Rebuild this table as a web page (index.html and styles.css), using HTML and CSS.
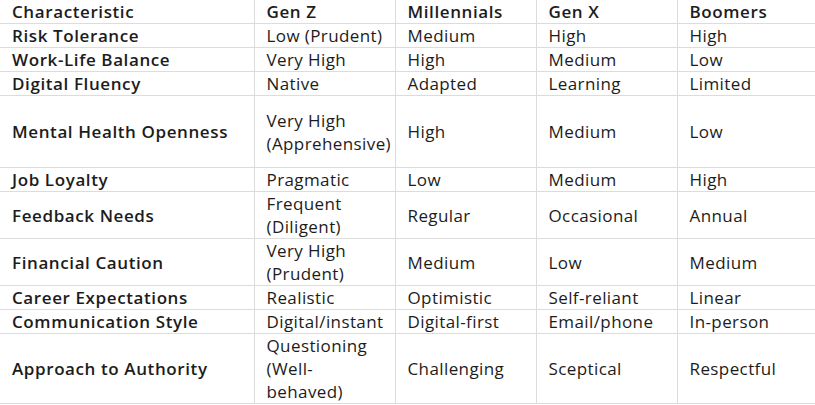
FILE: index.html
```html
<!DOCTYPE html>
<html lang="en">
<head>
<meta charset="utf-8">
<title>Generations</title>
<link rel="stylesheet" href="styles.css">
</head>
<body>
<table class="gen-table">
  <colgroup>
    <col class="c-char">
    <col class="c-gen">
    <col class="c-gen">
    <col class="c-gen">
    <col class="c-last">
  </colgroup>
  <thead>
    <tr>
      <th>Characteristic</th>
      <th>Gen Z</th>
      <th>Millennials</th>
      <th>Gen X</th>
      <th>Boomers</th>
    </tr>
  </thead>
  <tbody>
    <tr><th>Risk Tolerance</th><td>Low (Prudent)</td><td>Medium</td><td>High</td><td>High</td></tr>
    <tr><th>Work-Life Balance</th><td>Very High</td><td>High</td><td>Medium</td><td>Low</td></tr>
    <tr><th>Digital Fluency</th><td>Native</td><td>Adapted</td><td>Learning</td><td>Limited</td></tr>
    <tr class="tall"><th>Mental Health Openness</th><td>Very High (Apprehensive)</td><td>High</td><td>Medium</td><td>Low</td></tr>
    <tr><th>Job Loyalty</th><td>Pragmatic</td><td>Low</td><td>Medium</td><td>High</td></tr>
    <tr><th>Feedback Needs</th><td>Frequent (Diligent)</td><td>Regular</td><td>Occasional</td><td>Annual</td></tr>
    <tr><th>Financial Caution</th><td>Very High (Prudent)</td><td>Medium</td><td>Low</td><td>Medium</td></tr>
    <tr><th>Career Expectations</th><td>Realistic</td><td>Optimistic</td><td>Self-reliant</td><td>Linear</td></tr>
    <tr><th>Communication Style</th><td>Digital/instant</td><td>Digital-first</td><td>Email/phone</td><td>In-person</td></tr>
    <tr><th>Approach to Authority</th><td>Questioning (Well-<br>behaved)</td><td>Challenging</td><td>Sceptical</td><td>Respectful</td></tr>
  </tbody>
</table>
</body>
</html>
```
FILE: styles.css
```css
html, body {
  margin: 0;
  padding: 0;
  background: #ffffff;
}

body {
  font-family: "Open Sans", "Noto Sans", sans-serif;
  font-size: 17px;
  letter-spacing: 0.4px;
  color: #1c1c1c;
  overflow: hidden;
}

.gen-table {
  border-collapse: collapse;
  table-layout: fixed;
  width: 818px;
}

.c-char { width: 254px; }
.c-gen { width: 141px; }
.c-last { width: 141px; }

.gen-table th,
.gen-table td {
  border: 1px solid #dcdcdc;
  padding: 0 2px 0 12px;
  line-height: 23px;
  height: 23px;
  text-align: left;
  vertical-align: middle;
  font-weight: 400;
}

.gen-table th {
  font-weight: 600;
  letter-spacing: 0.6px;
}

.gen-table tr > :first-child {
  border-left: none;
}

.gen-table thead th {
  border-top: none;
}

.gen-table tr.tall > * {
  height: 71px;
}
```
